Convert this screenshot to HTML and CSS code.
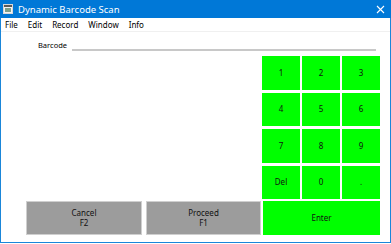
FILE: index.html
```html
<!DOCTYPE html>
<html lang="en">
<head>
    <meta charset="UTF-8">
    <meta name="viewport" content="width=device-width, initial-scale=1.0">
    <title>Dynamic Barcode Scan</title>
    <link rel="stylesheet" href="styles.css">
</head>
<body>
    <div class="window">
        <div class="titlebar">
            <svg class="app-icon" width="10" height="10" viewBox="0 0 10 10">
                <rect x="0.5" y="0.5" width="9" height="9" fill="#f4f4f4" stroke="#d8d8d8"/>
                <rect x="1" y="1" width="8" height="2" fill="#5a5a5a"/>
                <rect x="2" y="4" width="6" height="4" fill="#7fa08a"/>
            </svg>
            <span class="title">Dynamic Barcode Scan</span>
            <svg class="close" width="9" height="9" viewBox="0 0 9 9">
                <path d="M1 1 L8 8 M8 1 L1 8" stroke="#ffffff" stroke-width="1.1"/>
            </svg>
        </div>
        <div class="menubar">
            <span class="menu-item">File</span>
            <span class="menu-item">Edit</span>
            <span class="menu-item">Record</span>
            <span class="menu-item">Window</span>
            <span class="menu-item">Info</span>
        </div>
        <div class="content">
            <div class="barcode-row">
                <label class="barcode-label">Barcode</label>
                <div class="barcode-input"></div>
            </div>
            <div class="keypad">
                <button class="key">1</button>
                <button class="key">2</button>
                <button class="key">3</button>
                <button class="key">4</button>
                <button class="key">5</button>
                <button class="key">6</button>
                <button class="key">7</button>
                <button class="key">8</button>
                <button class="key">9</button>
                <button class="key">Del</button>
                <button class="key">0</button>
                <button class="key">.</button>
            </div>
            <div class="actions">
                <button class="action cancel">Cancel<br>F2</button>
                <button class="action proceed">Proceed<br>F1</button>
                <button class="key enter">Enter</button>
            </div>
        </div>
    </div>
</body>
</html>
```

FILE: styles.css
```css
* {
    box-sizing: border-box;
}
body {
    margin: 0;
    background-color: #ffffff;
    font-family: 'Noto Sans', 'Open Sans', sans-serif;
}
.window {
    width: 391px;
    height: 243px;
    border: 1px solid #1a86d9;
    border-top: none;
    background-color: #ffffff;
    display: flex;
    flex-direction: column;
}
.titlebar {
    flex-shrink: 0;
    height: 18px;
    background-color: #0078d7;
    display: flex;
    align-items: center;
    padding-left: 2px;
    padding-right: 6px;
    margin: 0 -1px;
}
.app-icon {
    margin-left: 1px;
    margin-right: 5px;
}
.title {
    color: #ffffff;
    font-size: 9.5px;
    flex: 1;
}
.menubar {
    flex-shrink: 0;
    height: 14px;
    display: flex;
    align-items: center;
    padding-left: 4px;
    border-bottom: 1px solid #f0f0f0;
    font-size: 8px;
    color: #000000;
}
.menu-item {
    margin-right: 10px;
}
.content {
    flex: 1;
    display: flex;
    flex-direction: column;
    padding: 0 10px 7px 25px;
}
.barcode-row {
    flex-shrink: 0;
    display: flex;
    align-items: center;
    height: 14px;
    margin-top: 6px;
    margin-bottom: 4px;
}
.barcode-label {
    font-size: 7.5px;
    margin-left: 12px;
    width: 34px;
}
.barcode-input {
    flex: 1;
    height: 2px;
    background-color: #c8c8c8;
    margin-top: 9px;
    margin-right: 4px;
}
.keypad {
    flex-shrink: 0;
    align-self: flex-end;
    width: 118px;
    display: grid;
    grid-template-columns: repeat(3, 38px);
    grid-auto-rows: 33.5px;
    column-gap: 2px;
    row-gap: 3px;
}
button {
    font-family: 'Noto Sans', 'Open Sans', sans-serif;
    font-size: 8px;
    color: #111111;
    padding: 0;
    cursor: pointer;
    line-height: 1.2;
}
.key {
    background-color: #00ff00;
    border: none;
}
.actions {
    flex-shrink: 0;
    margin-top: 2px;
    display: flex;
    height: 34px;
}
.action {
    background-color: #9c9c9c;
    border: 1px solid #cfcfcf;
}
.cancel {
    width: 116px;
}
.proceed {
    width: 115px;
    margin-left: 4px;
}
.enter {
    width: 117px;
    margin-left: 2px;
}
```
